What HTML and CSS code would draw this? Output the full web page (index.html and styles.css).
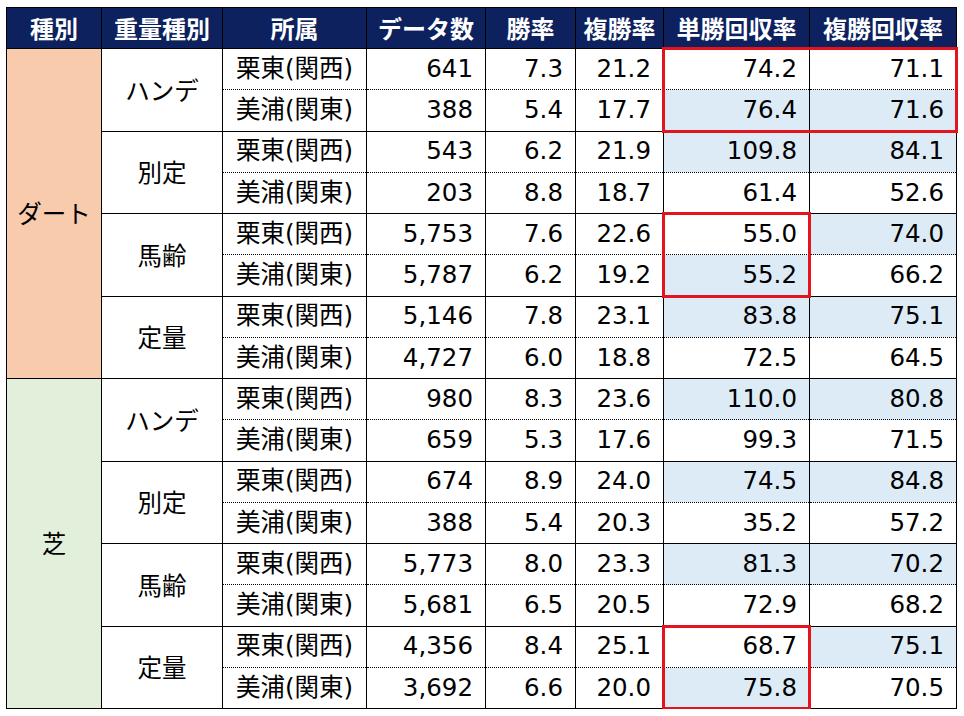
FILE: index.html
```html
<!DOCTYPE html>
<html lang="ja">
<head>
<meta charset="utf-8">
<link rel="stylesheet" href="styles.css">
</head>
<body>
<table class="grid">
<colgroup>
<col class="c1"><col class="c2"><col class="c3"><col class="c4"><col class="c5"><col class="c6"><col class="c7"><col class="c8">
</colgroup>
<thead>
<tr><th>種別</th><th>重量種別</th><th>所属</th><th>データ数</th><th>勝率</th><th>複勝率</th><th>単勝回収率</th><th>複勝回収率</th></tr>
</thead>
<tbody>
<tr class="top">
<td rowspan="8" class="kind dirt">ダート</td>
<td rowspan="2" class="wt">ハンデ</td>
<td class="aff">栗東(関西)</td><td class="num">641</td><td class="num">7.3</td><td class="num">21.2</td><td class="num rb-t rb-l">74.2</td><td class="num rb-t rb-r">71.1</td></tr>
<tr class="bot"><td class="aff">美浦(関東)</td><td class="num">388</td><td class="num">5.4</td><td class="num">17.7</td><td class="num hl rb-b rb-l">76.4</td><td class="num hl rb-b rb-r">71.6</td></tr>

<tr class="top"><td rowspan="2" class="wt">別定</td>
<td class="aff">栗東(関西)</td><td class="num">543</td><td class="num">6.2</td><td class="num">21.9</td><td class="num hl">109.8</td><td class="num hl">84.1</td></tr>
<tr class="bot"><td class="aff">美浦(関東)</td><td class="num">203</td><td class="num">8.8</td><td class="num">18.7</td><td class="num">61.4</td><td class="num">52.6</td></tr>

<tr class="top"><td rowspan="2" class="wt">馬齢</td>
<td class="aff">栗東(関西)</td><td class="num">5,753</td><td class="num">7.6</td><td class="num">22.6</td><td class="num rb-t rb-l rb-r">55.0</td><td class="num hl">74.0</td></tr>
<tr class="bot"><td class="aff">美浦(関東)</td><td class="num">5,787</td><td class="num">6.2</td><td class="num">19.2</td><td class="num hl rb-b rb-l rb-r">55.2</td><td class="num">66.2</td></tr>

<tr class="top"><td rowspan="2" class="wt">定量</td>
<td class="aff">栗東(関西)</td><td class="num">5,146</td><td class="num">7.8</td><td class="num">23.1</td><td class="num hl">83.8</td><td class="num hl">75.1</td></tr>
<tr class="bot"><td class="aff">美浦(関東)</td><td class="num">4,727</td><td class="num">6.0</td><td class="num">18.8</td><td class="num">72.5</td><td class="num">64.5</td></tr>

<tr class="top">
<td rowspan="8" class="kind turf">芝</td>
<td rowspan="2" class="wt">ハンデ</td>
<td class="aff">栗東(関西)</td><td class="num">980</td><td class="num">8.3</td><td class="num">23.6</td><td class="num hl">110.0</td><td class="num hl">80.8</td></tr>
<tr class="bot"><td class="aff">美浦(関東)</td><td class="num">659</td><td class="num">5.3</td><td class="num">17.6</td><td class="num">99.3</td><td class="num">71.5</td></tr>

<tr class="top"><td rowspan="2" class="wt">別定</td>
<td class="aff">栗東(関西)</td><td class="num">674</td><td class="num">8.9</td><td class="num">24.0</td><td class="num hl">74.5</td><td class="num hl">84.8</td></tr>
<tr class="bot"><td class="aff">美浦(関東)</td><td class="num">388</td><td class="num">5.4</td><td class="num">20.3</td><td class="num">35.2</td><td class="num">57.2</td></tr>

<tr class="top"><td rowspan="2" class="wt">馬齢</td>
<td class="aff">栗東(関西)</td><td class="num">5,773</td><td class="num">8.0</td><td class="num">23.3</td><td class="num hl">81.3</td><td class="num hl">70.2</td></tr>
<tr class="bot"><td class="aff">美浦(関東)</td><td class="num">5,681</td><td class="num">6.5</td><td class="num">20.5</td><td class="num">72.9</td><td class="num">68.2</td></tr>

<tr class="top"><td rowspan="2" class="wt">定量</td>
<td class="aff">栗東(関西)</td><td class="num">4,356</td><td class="num">8.4</td><td class="num">25.1</td><td class="num rb-t rb-l rb-r">68.7</td><td class="num hl">75.1</td></tr>
<tr class="bot"><td class="aff">美浦(関東)</td><td class="num">3,692</td><td class="num">6.6</td><td class="num">20.0</td><td class="num hl rb-b rb-l rb-r">75.8</td><td class="num">70.5</td></tr>
</tbody>
</table>
</body>
</html>
```

FILE: styles.css
```css
html, body {
  margin: 0;
  background: #ffffff;
}
body {
  padding: 7px 0 0 6px;
  font-family: "DejaVu Sans", "Noto Sans CJK JP", sans-serif;
  color: #000;
}
.grid {
  border-collapse: collapse;
  table-layout: fixed;
  width: 951px;
  font-size: 24.5px;
}
.c1 { width: 95px; }
.c2 { width: 121px; }
.c3 { width: 144px; }
.c4 { width: 119px; }
.c5 { width: 90px; }
.c6 { width: 88px; }
.c7 { width: 146px; }
.c8 { width: 147px; }

.grid th {
  height: 40px;
  background: #0c215e;
  color: #fff;
  font-family: "Noto Sans CJK JP", sans-serif;
  font-weight: 700;
  font-size: 24px;
  border: 1px solid #000;
  padding: 0;
  text-align: center;
  white-space: nowrap;
  line-height: 1;
}
.grid td {
  height: 40.25px;
  border: 1px solid #000;
  padding: 0;
  line-height: 1;
  white-space: nowrap;
}
.grid tr.top td.aff,
.grid tr.top td.num {
  border-bottom: 1px dotted #000;
}
.grid tr.bot td {
  border-top: 1px dotted #000;
}
.kind {
  text-align: center;
  font-family: "Noto Sans CJK JP", sans-serif;
}
.dirt { background: #f8cbad; }
.turf { background: #e2efda; }
.wt {
  text-align: center;
  font-family: "Noto Sans CJK JP", sans-serif;
}
.aff {
  text-align: center;
}
.num {
  text-align: right;
  padding-right: 12px !important;
}
.hl { background: #ddebf7; }

.grid td.rb-t, .grid td.rb-b, .grid td.rb-l, .grid td.rb-r {
  position: relative;
}
.rb-t::after, .rb-b::after, .rb-l::after, .rb-r::after {
  content: "";
  position: absolute;
  z-index: 2;
  top: -2px;
  bottom: -2px;
  left: -2px;
  right: -2px;
  pointer-events: none;
}
.rb-t::after { border-top: 3px solid #e3141c; }
.rb-b::after { border-bottom: 3px solid #e3141c; }
.rb-l::after { border-left: 3px solid #e3141c; }
.rb-r::after { border-right: 3px solid #e3141c; }
```
